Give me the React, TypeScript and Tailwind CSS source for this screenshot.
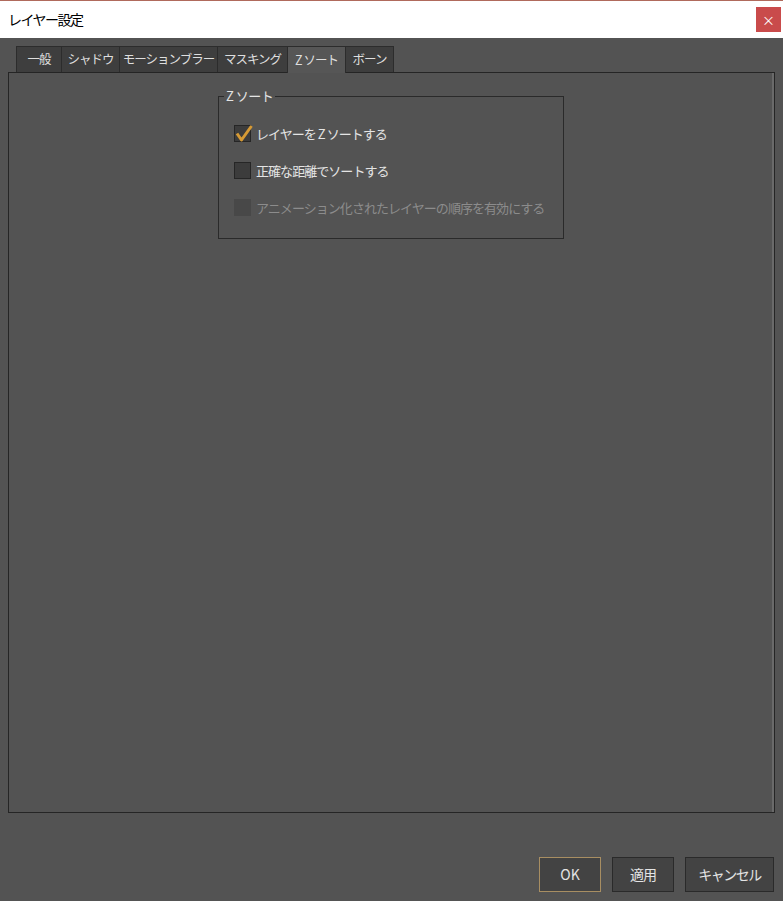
import React, { useState } from 'react';

const FONT = { fontFamily: '"Noto Sans CJK JP", "Noto Sans", sans-serif' };

const TABS = [
  { label: '一般', w: 'w-[46px]' },
  { label: 'シャドウ', w: 'w-[59px]' },
  { label: 'モーションブラー', w: 'w-[99px]' },
  { label: 'マスキング', w: 'w-[71px]' },
  { label: 'Z ソート', w: 'w-[59px]' },
  { label: 'ボーン', w: 'w-[49px]' },
];

interface CheckRowProps {
  label: string;
  checked?: boolean;
  disabled?: boolean;
  onToggle?: () => void;
}

const CheckRow: React.FC<CheckRowProps> = ({ label, checked, disabled, onToggle }) => (
  <div className="flex items-center gap-[5px] h-[17px]" onClick={disabled ? undefined : onToggle}>
    <div
      className={`relative w-[17px] h-[17px] shrink-0 ${
        disabled ? 'bg-[#484848]' : 'bg-[#3c3c3c] border border-[#262626]'
      }`}
    >
      {checked && (
        <svg className="absolute -left-[1px] -top-[3px]" width="20" height="20" viewBox="0 0 20 20">
          <path d="M3 10.5 L7.5 17 L17.5 3" fill="none" stroke="#d69a35" strokeWidth="3" strokeLinejoin="round" />
        </svg>
      )}
    </div>
    <span
      className={`text-[13px] leading-none whitespace-nowrap tracking-[-0.95px] ${
        disabled ? 'text-[#8c8c8c]' : 'text-[#e4e4e4]'
      }`}
    >
      {label}
    </span>
  </div>
);

export default function App() {
  const [tab, setTab] = useState(4);
  const [sortZ, setSortZ] = useState(true);
  const [exact, setExact] = useState(false);

  return (
    <div className="w-[783px] h-[901px] flex flex-col bg-[#535353]" style={FONT}>
      {/* title bar */}
      <div className="h-[38px] shrink-0 bg-white border-t border-[#b06a5c] flex items-center justify-between pl-[8px] pr-[2px]">
        <span className="text-[14px] text-black tracking-[-1.5px]">レイヤー設定</span>
        <div className="w-[25px] h-[25px] bg-[#c94b4b] flex items-center justify-center text-white text-[13px] leading-none">
          ×
        </div>
      </div>

      <div className="flex-1 flex flex-col px-[8px] pt-[8px] pb-[9px]">
        {/* tabs */}
        <div className="flex pl-[8px] h-[26px] relative z-10">
          {TABS.map((t, i) => (
            <div
              key={t.label}
              onClick={() => setTab(i)}
              className={`${t.w} flex items-center justify-center whitespace-nowrap text-[12.5px] tracking-[-1px] text-[#dedede] border-t border-l border-r border-[#2c2c2c] -ml-px first:ml-0 ${
                i === tab ? 'bg-[#565656] h-[27px]' : 'bg-[#3e3e3e] h-[26px]'
              }`}
            >
              {t.label}
            </div>
          ))}
        </div>

        {/* panel */}
        <div className="h-[741px] border border-[#252525] shadow-[inset_-2px_0_0_#6a6a6a] bg-[#535353] pl-[209px] pt-[14px]">
          <fieldset className="w-[346px] h-[152px] border border-[#2a2a2a] pl-[15px] pr-2 pt-[20px]">
            <legend className="text-[13px] text-[#e4e4e4] leading-[18px] tracking-[-0.5px] -ml-[10px] px-[2px]">Z ソート</legend>
            <div className="flex flex-col gap-[20px]">
              <CheckRow label="レイヤーを Z ソートする" checked={sortZ} onToggle={() => setSortZ(!sortZ)} />
              <CheckRow label="正確な距離でソートする" checked={exact} onToggle={() => setExact(!exact)} />
              <CheckRow label="アニメーション化されたレイヤーの順序を有効にする" disabled />
            </div>
          </fieldset>
        </div>

        <div className="flex-1" />

        {/* buttons */}
        <div className="flex justify-end gap-[11px] pr-[1px]">
          <button className="w-[62px] h-[35px] bg-[#434343] border border-[#a88e62] text-[14px] text-[#e4e4e4]">OK</button>
          <button className="w-[62px] h-[35px] bg-[#434343] border border-[#2a2a2a] text-[14px] tracking-[-1px] text-[#e4e4e4]">適用</button>
          <button className="w-[89px] h-[35px] bg-[#434343] border border-[#2a2a2a] text-[14px] tracking-[-1.5px] text-[#e4e4e4]">キャンセル</button>
        </div>
      </div>
    </div>
  );
}
